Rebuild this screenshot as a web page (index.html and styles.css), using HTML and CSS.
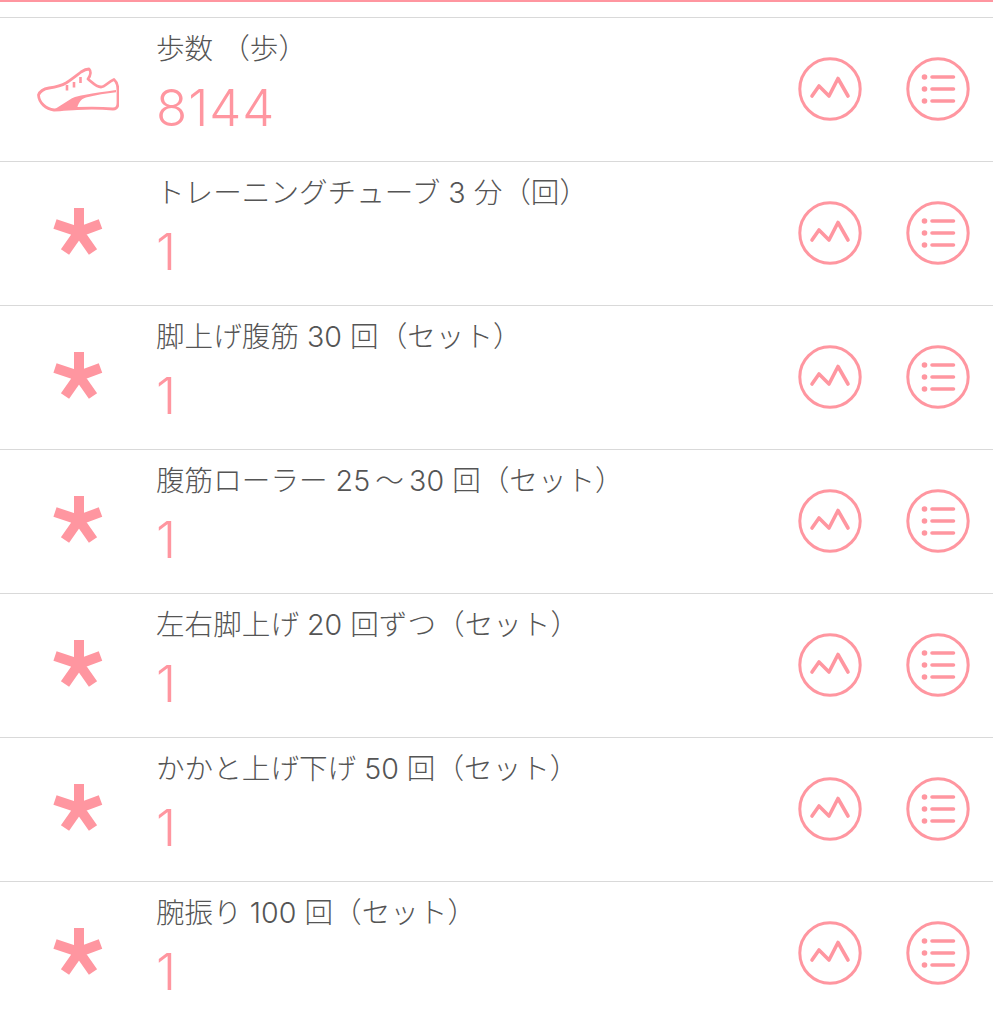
FILE: index.html
```html
<!DOCTYPE html>
<html lang="ja">
<head>
    <meta charset="UTF-8">
    <meta name="viewport" content="width=device-width, initial-scale=1.0">
    <title>記録</title>
    <link rel="stylesheet" href="styles.css">
</head>
<body>
    <svg class="defs" width="0" height="0">
        <symbol id="asterisk" viewBox="0 0 52 48">
            <path d="M26 0V24M26 24L2 16M26 24L47.500 16M26 24L12 44M26 24L40 44" fill="none" stroke="currentColor" stroke-width="10"/>
        </symbol>
        <symbol id="shoe" viewBox="0 0 82 46">
            <path d="M1.500 28C3 24 6 22 12 21C19 20 24 19 29 16C35 12 40 8 44 5C47 3 50 2 52 2C54 4 54 8 51 12C56 16 59 20 64 20C68 20 71 15 77 12.500C80 15 81 19 81 24V36C81 40 79 42 76 42C64 41 52 41 40 41.500C32 42 24 43 17 43C9 42 2 36 1.500 28Z" fill="none" stroke="currentColor" stroke-width="2.800" stroke-linejoin="round"/>
            <path d="M18 42L35 31.300C39 29.500 43 28.500 47 28C58 26 68 24.500 79 23V25.300C69 26.500 59 28 50 30.300C45 31.500 42 34 40 41.500C32 41.500 25 42 18 42Z" fill="currentColor"/>
            <path d="M30 18V23.500M37 15V20.500M43.500 10V16" fill="none" stroke="currentColor" stroke-width="2.600"/>
        </symbol>
        <symbol id="graph" viewBox="0 0 64 64">
            <circle cx="32" cy="32" r="30.200" fill="none" stroke="currentColor" stroke-width="3"/>
            <path d="M14 39L21 29L31 39L40 21.500L50 39" fill="none" stroke="currentColor" stroke-width="3.600" stroke-linecap="round" stroke-linejoin="round"/>
        </symbol>
        <symbol id="list" viewBox="0 0 64 64">
            <circle cx="32" cy="32" r="30.200" fill="none" stroke="currentColor" stroke-width="3"/>
            <circle cx="18.500" cy="20" r="2.800" fill="currentColor"/>
            <circle cx="18.500" cy="32" r="2.800" fill="currentColor"/>
            <circle cx="18.500" cy="44" r="2.800" fill="currentColor"/>
            <path d="M26 20H47.500M26 32H47.500M26 44H47.500" fill="none" stroke="currentColor" stroke-width="3.600" stroke-linecap="round"/>
        </symbol>
    </svg>

    <div class="top-line"></div>

    <ul class="record-list">
        <li class="record">
            <div class="record-icon"><svg class="shoe"><use href="#shoe"/></svg></div>
            <div class="record-body">
                <div class="record-name">歩数 （歩）</div>
                <div class="record-value">8144</div>
            </div>
            <div class="record-actions">
                <svg class="action"><use href="#graph"/></svg>
                <svg class="action"><use href="#list"/></svg>
            </div>
        </li>
        <li class="record">
            <div class="record-icon"><svg class="star"><use href="#asterisk"/></svg></div>
            <div class="record-body">
                <div class="record-name">トレーニングチューブ 3 分（回）</div>
                <div class="record-value">1</div>
            </div>
            <div class="record-actions">
                <svg class="action"><use href="#graph"/></svg>
                <svg class="action"><use href="#list"/></svg>
            </div>
        </li>
        <li class="record">
            <div class="record-icon"><svg class="star"><use href="#asterisk"/></svg></div>
            <div class="record-body">
                <div class="record-name">脚上げ腹筋 30 回（セット）</div>
                <div class="record-value">1</div>
            </div>
            <div class="record-actions">
                <svg class="action"><use href="#graph"/></svg>
                <svg class="action"><use href="#list"/></svg>
            </div>
        </li>
        <li class="record">
            <div class="record-icon"><svg class="star"><use href="#asterisk"/></svg></div>
            <div class="record-body">
                <div class="record-name">腹筋ローラー 25&#8201;～&#8201;30 回（セット）</div>
                <div class="record-value">1</div>
            </div>
            <div class="record-actions">
                <svg class="action"><use href="#graph"/></svg>
                <svg class="action"><use href="#list"/></svg>
            </div>
        </li>
        <li class="record">
            <div class="record-icon"><svg class="star"><use href="#asterisk"/></svg></div>
            <div class="record-body">
                <div class="record-name">左右脚上げ 20 回ずつ（セット）</div>
                <div class="record-value">1</div>
            </div>
            <div class="record-actions">
                <svg class="action"><use href="#graph"/></svg>
                <svg class="action"><use href="#list"/></svg>
            </div>
        </li>
        <li class="record">
            <div class="record-icon"><svg class="star"><use href="#asterisk"/></svg></div>
            <div class="record-body">
                <div class="record-name">かかと上げ下げ 50 回（セット）</div>
                <div class="record-value">1</div>
            </div>
            <div class="record-actions">
                <svg class="action"><use href="#graph"/></svg>
                <svg class="action"><use href="#list"/></svg>
            </div>
        </li>
        <li class="record">
            <div class="record-icon"><svg class="star"><use href="#asterisk"/></svg></div>
            <div class="record-body">
                <div class="record-name">腕振り 100 回（セット）</div>
                <div class="record-value">1</div>
            </div>
            <div class="record-actions">
                <svg class="action"><use href="#graph"/></svg>
                <svg class="action"><use href="#list"/></svg>
            </div>
        </li>
    </ul>
</body>
</html>
```

FILE: styles.css
```css
html, body {
    height: 1024px;
    overflow: hidden;
}

body {
    margin: 0;
    background-color: #fff;
    font-family: "Noto Sans CJK JP", "Noto Sans", sans-serif;
}

.defs {
    display: block;
    height: 0;
}

.top-line {
    height: 2px;
    background-color: #ff96a0;
}

.record-list {
    list-style: none;
    margin: 15px 0 0 0;
    padding: 0;
    border-top: 1px solid #d9d9d9;
}

.record {
    display: flex;
    align-items: flex-start;
    height: 143px;
    border-bottom: 1px solid #d9d9d9;
    color: #ff96a0;
}

.record-icon {
    flex: none;
    display: flex;
    justify-content: center;
    width: 156px;
    padding-top: 46px;
}

.shoe {
    width: 82px;
    height: 46px;
    margin-top: 3px;
}

.star {
    width: 52px;
    height: 48px;
    margin-left: 2px;
}

.record-body {
    flex: 1;
    padding: 12px 0 0 0;
}

.record-name {
    font-family: Inter, "Noto Sans CJK JP", sans-serif;
    font-size: 28.6px;
    font-weight: 300;
    line-height: 38px;
    color: #555;
}

.record-value {
    margin-top: 10px;
    font-family: Inter, "Liberation Sans", sans-serif;
    font-size: 51px;
    font-weight: 350;
    letter-spacing: 1px;
    line-height: 60px;
}

.record-actions {
    flex: none;
    display: flex;
    gap: 44px;
    padding: 39px 23px 0 0;
}

.action {
    width: 64px;
    height: 64px;
}
```
